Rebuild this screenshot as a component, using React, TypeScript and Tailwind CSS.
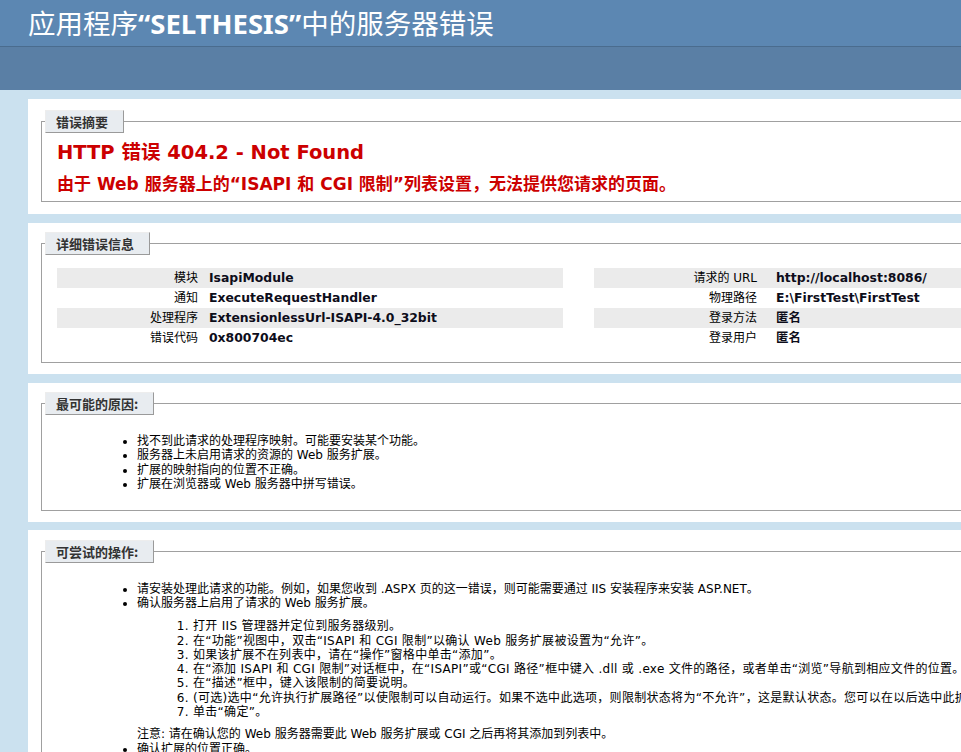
import React from 'react';

const sans = "font-['DejaVu_Sans','Noto_Sans_CJK_SC',sans-serif]";

const Legend: React.FC<{ children: React.ReactNode }> = ({ children }) => (
  <div className="-mt-[12px] -ml-[12px] w-fit border-t border-l border-t-[#ededed] border-l-[#ededed] border-r border-b border-r-[#9a9a9a] border-b-[#9a9a9a] bg-[#e8ecf0] pt-[4px] pb-[4px] pl-[10px] pr-[15px] font-['Noto_Sans_CJK_SC',sans-serif] text-[13px] leading-[13px] font-bold text-[#333]">
    {children}
  </div>
);

const leftRows = [
  ['模块', 'IsapiModule'],
  ['通知', 'ExecuteRequestHandler'],
  ['处理程序', 'ExtensionlessUrl-ISAPI-4.0_32bit'],
  ['错误代码', '0x800704ec'],
];

const rightRows = [
  ['请求的 URL', 'http://localhost:8086/'],
  ['物理路径', 'E:\\FirstTest\\FirstTest'],
  ['登录方法', '匿名'],
  ['登录用户', '匿名'],
];

const causes = [
  '找不到此请求的处理程序映射。可能要安装某个功能。',
  '服务器上未启用请求的资源的 Web 服务扩展。',
  '扩展的映射指向的位置不正确。',
  '扩展在浏览器或 Web 服务器中拼写错误。',
];

const steps = [
  '打开 IIS 管理器并定位到服务器级别。',
  '在“功能”视图中，双击“ISAPI 和 CGI 限制”以确认 Web 服务扩展被设置为“允许”。',
  '如果该扩展不在列表中，请在“操作”窗格中单击“添加”。',
  '在“添加 ISAPI 和 CGI 限制”对话框中，在“ISAPI”或“CGI 路径”框中键入 .dll 或 .exe 文件的路径，或者单击“浏览”导航到相应文件的位置。',
  '在“描述”框中，键入该限制的简要说明。',
  '(可选)选中“允许执行扩展路径”以使限制可以自动运行。如果不选中此选项，则限制状态将为“不允许”，这是默认状态。您可以在以后选中此扩展并在“操作”窗格中单击“允许”。',
  '单击“确定”。',
];

export default function App() {
  return (
    <div className={`h-screen overflow-hidden bg-[#cbe1ef] ${sans} text-black`}>
      <div className="w-[1600px]">
        <div className="flex h-[46px] items-center bg-[#5c87b2] pl-[28px]">
          <h1 className="font-['Noto_Sans_CJK_SC',sans-serif] text-[27.5px] leading-[32px] font-normal text-white whitespace-nowrap">
            应用程序<span className="font-['Noto_Sans',sans-serif] font-bold">“SELTHESIS”</span>中的服务器错误
          </h1>
        </div>
        <div className="h-[44px] border-t border-[#4a6c8e] bg-[#5a7fa5]" />

        <div className="ml-[28px] w-[1500px]">
          {/* summary */}
          <div className="mt-[9px] bg-white px-[11px] pt-[22px] pb-[12px]">
            <div className="mx-[2px] border border-[#a0a0a0] px-[15px] pb-[7px]">
              <Legend>错误摘要</Legend>
              <h2 className="mt-[9px] text-[19.5px] leading-[22px] font-bold text-[#cc0000] whitespace-nowrap">
                HTTP 错误 404.2 - Not Found
              </h2>
              <h3 className="mt-[10px] text-[17px] leading-[20px] font-bold text-[#cc0000] whitespace-nowrap">
                由于 Web 服务器上的“ISAPI 和 CGI 限制”列表设置，无法提供您请求的页面。
              </h3>
            </div>
          </div>

          {/* details */}
          <div className="mt-[9px] bg-white px-[11px] pt-[20px] pb-[11px]">
            <div className="mx-[2px] border border-[#a0a0a0] px-[15px] pb-[14px]">
              <Legend>详细错误信息</Legend>
              <div className="mt-[13px] flex">
                <div className="w-[506px]">
                  {leftRows.map(([k, v], i) => (
                    <div key={k} className={`flex h-[20px] items-center ${i % 2 === 0 ? 'bg-[#ebebeb]' : ''}`}>
                      <div className="w-[141px] text-right text-[12px] leading-[14px]">{k}</div>
                      <div className="pl-[11px] text-[12.4px] leading-[14px] font-bold text-[#0d0d1a]">{v}</div>
                    </div>
                  ))}
                </div>
                <div className="ml-[31px] flex-1">
                  {rightRows.map(([k, v], i) => (
                    <div key={k} className={`flex h-[20px] items-center ${i % 2 === 0 ? 'bg-[#ebebeb]' : ''}`}>
                      <div className="w-[163px] text-right text-[12px] leading-[14px]">{k}</div>
                      <div className="pl-[19px] text-[12.4px] leading-[14px] font-bold text-[#0d0d1a]">{v}</div>
                    </div>
                  ))}
                </div>
              </div>
            </div>
          </div>

          {/* causes */}
          <div className="mt-[9px] bg-white px-[11px] pt-[20px] pb-[11px]">
            <div className="mx-[2px] border border-[#a0a0a0] px-[15px] pb-[18px]">
              <Legend>最可能的原因:</Legend>
              <ul className="mt-[19px] list-disc pl-[80px] text-[12px] leading-[14.4px]">
                {causes.map((c) => (
                  <li key={c} className="whitespace-nowrap">{c}</li>
                ))}
              </ul>
            </div>
          </div>

          {/* things to try */}
          <div className="mt-[8px] bg-white px-[11px] pt-[21px] pb-[11px]">
            <div className="mx-[2px] border border-[#a0a0a0] px-[15px] pb-[18px]">
              <Legend>可尝试的操作:</Legend>
              <ul className="mt-[19px] list-disc pl-[80px] text-[12px] leading-[14.3px]">
                <li className="whitespace-nowrap">
                  请安装处理此请求的功能。例如，如果您收到 .ASPX 页的这一错误，则可能需要通过 IIS 安装程序来安装 ASP.NET。
                </li>
                <li className="whitespace-nowrap">
                  确认服务器上启用了请求的 Web 服务扩展。
                  <ol className="mt-[9px] mb-[8px] list-decimal pl-[56px] tracking-[0.3px]">
                    {steps.map((s) => (
                      <li key={s}>{s}</li>
                    ))}
                  </ol>
                  注意: 请在确认您的 Web 服务器需要此 Web 服务扩展或 CGI 之后再将其添加到列表中。
                </li>
                <li className="whitespace-nowrap">确认扩展的位置正确。</li>
              </ul>
            </div>
          </div>
        </div>
      </div>
    </div>
  );
}
